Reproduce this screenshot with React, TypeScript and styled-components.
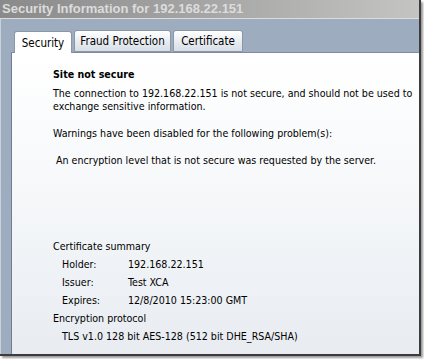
import React from "react";
import styled, { createGlobalStyle } from "styled-components";

const Global = createGlobalStyle`
  html, body {
    margin: 0;
    padding: 0;
    background: #ffffff;
    overflow: hidden;
  }
  body {
    font-family: Tahoma, "DejaVu Sans Condensed", "Liberation Sans", sans-serif;
  }
`;

const tabs = [
  { label: "Security", width: 58 },
  { label: "Fraud Protection", width: 97 },
  { label: "Certificate", width: 70 },
];

const certRows = [
  { label: "Holder:", value: "192.168.22.151" },
  { label: "Issuer:", value: "Test XCA" },
  { label: "Expires:", value: "12/8/2010 15:23:00 GMT" },
];

export default function App() {
  return (
    <>
      <Global />
      <Stage>
        <Frame>
          <TitleBar>Security Information for 192.168.22.151</TitleBar>
          <Body>
            <TabStrip>
              {tabs.map((t, i) => (
                <Tab key={t.label} $active={i === 0} $width={t.width}>
                  {t.label}
                </Tab>
              ))}
            </TabStrip>
            <Panel>
              <Heading>Site not secure</Heading>
              <Para>
                The connection to 192.168.22.151 is not secure, and should not
                be used to exchange sensitive information.
              </Para>
              <Para>Warnings have been disabled for the following problem(s):</Para>
              <Problem>
                An encryption level that is not secure was requested by the
                server.
              </Problem>
              <Spacer />
              <Summary>
                <SectionLabel>Certificate summary</SectionLabel>
                {certRows.map((r) => (
                  <CertRow key={r.label}>
                    <span>{r.label}</span>
                    <span>{r.value}</span>
                  </CertRow>
                ))}
                <SectionLabel>Encryption protocol</SectionLabel>
                <Indented>TLS v1.0 128 bit AES-128 (512 bit DHE_RSA/SHA)</Indented>
              </Summary>
            </Panel>
          </Body>
        </Frame>
      </Stage>
    </>
  );
}

const Stage = styled.div`
  width: 424px;
  height: 359px;
  position: relative;
`;

const Frame = styled.div`
  width: 421px;
  height: 356px;
  display: flex;
  flex-direction: column;
  background: #9eacbf;
  border-right: 2px solid #3c3c3c;
  border-bottom: 2px solid #3c3c3c;
  box-sizing: border-box;
  box-shadow: 2px 2px 2px rgba(0, 0, 0, 0.4);
`;

const TitleBar = styled.div`
  height: 18px;
  flex: none;
  background: linear-gradient(to right, #8a8a8a, #a6a6a6 50%, #c4c4c2);
  border-bottom: 1px solid #dcdcd8;
  color: #dcdcdc;
  font-family: "Liberation Sans", sans-serif;
  font-weight: bold;
  font-size: 13px;
  line-height: 18px;
  padding-left: 2px;
  white-space: nowrap;
  overflow: hidden;
`;

const Body = styled.div`
  flex: 1;
  display: flex;
  flex-direction: column;
  padding-left: 10px;
  border-left: 1px solid #c8d0da;
  min-height: 0;
`;

const TabStrip = styled.div`
  height: 34px;
  flex: none;
  display: flex;
  align-items: flex-end;
  gap: 2px;
  padding-left: 3px;
  border-bottom: 1px solid #7d8ca2;
  box-sizing: border-box;
`;

const Tab = styled.div<{ $active: boolean; $width: number }>`
  width: ${(p) => p.$width}px;
  height: 22px;
  margin-bottom: ${(p) => (p.$active ? "-1px" : "0")};
  box-sizing: border-box;
  display: flex;
  align-items: center;
  justify-content: center;
  padding-bottom: ${(p) => (p.$active ? "0" : "1px")};
  font-size: 11.5px;
  color: #000;
  border: 1px solid #8c97a6;
  border-bottom: ${(p) => (p.$active ? "none" : "1px solid #8c97a6")};
  border-radius: 3px 3px 0 0;
  background: ${(p) =>
    p.$active ? "#ffffff" : "linear-gradient(#ffffff, #e8ecf1 55%, #d9dfe7)"};
`;

const Panel = styled.div`
  flex: 1;
  display: flex;
  flex-direction: column;
  padding: 15px 0 11px 41px;
  background: linear-gradient(#ffffff, #f6f8fa 45%, #e8ecf1);
  border-left: 1px solid #6f7e94;
  font-size: 10.6px;
  line-height: 13px;
  color: #000;
`;

const Heading = styled.div`
  font-weight: bold;
  margin-bottom: 6px;
`;

const Para = styled.div`
  margin-bottom: 14px;
`;

const Problem = styled.div`
  padding-left: 3px;
`;

const Spacer = styled.div`
  flex: 1;
`;

const Summary = styled.div`
  display: flex;
  flex-direction: column;
  gap: 5px;
`;

const SectionLabel = styled.div``;

const CertRow = styled.div`
  display: grid;
  grid-template-columns: 66px auto;
  padding-left: 9px;
`;

const Indented = styled.div`
  padding-left: 9px;
`;
